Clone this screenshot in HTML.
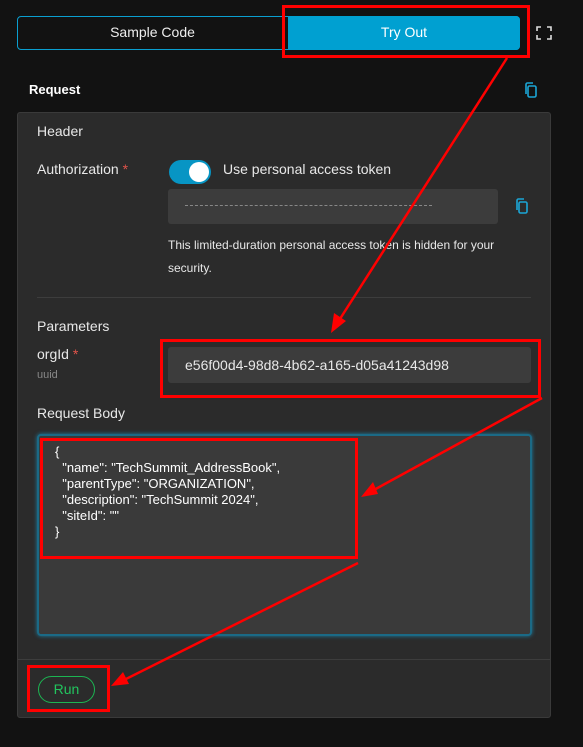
<!DOCTYPE html><html><head><style>
body{margin:0;width:583px;height:747px;background:#121212;font-family:"Liberation Sans",sans-serif;color:#e8e8e8;position:relative;overflow:hidden}
.a{position:absolute}
.t{font-size:14px}
</style></head><body>
<div class="a" style="left:17px;top:16px;width:503px;height:34px;border:1px solid #0a9fd0;border-radius:4px;box-sizing:border-box"></div>
<div class="a t" style="left:17px;top:16px;width:271px;height:34px;line-height:32px;text-align:center;color:#eee">Sample Code</div>
<div class="a t" style="left:288px;top:16px;width:232px;height:34px;line-height:32px;text-align:center;background:#00a0d1;border-radius:0 4px 4px 0;color:#fff">Try Out</div>
<svg class="a" style="left:536px;top:26px" width="16" height="14" viewBox="0 0 16 14" fill="none" stroke="#ddd" stroke-width="1.6"><path d="M1 5V1h4M11 1h4v4M15 9v4h-4M5 13H1V9"/></svg>
<div class="a" style="left:29px;top:82px;font-size:13px;font-weight:bold;color:#fff">Request</div>
<svg class="a" style="left:524px;top:82px" width="14" height="16" viewBox="0 0 14 16" fill="none" stroke="#1ba6d6" stroke-width="1.6"><rect x="4" y="4" width="8" height="11" rx="1.5"/><path d="M2 12V2.5A1.5 1.5 0 0 1 3.5 1H9"/></svg>
<div class="a" style="left:17px;top:112px;width:534px;height:606px;background:#2b2b2b;border:1px solid #3a3a3a;border-radius:3px;box-sizing:border-box"></div>
<div class="a t" style="left:37px;top:123px">Header</div>
<div class="a t" style="left:37px;top:161px">Authorization <span style="color:#e0534a">*</span></div>
<div class="a" style="left:169px;top:160px;width:42px;height:24px;border-radius:12px;background:#0795c4"></div>
<div class="a" style="left:189px;top:162px;width:20px;height:20px;border-radius:50%;background:#fff"></div>
<div class="a t" style="left:223px;top:161px">Use personal access token</div>
<div class="a" style="left:168px;top:189px;width:330px;height:35px;background:#3c3c3c;border-radius:3px"></div>
<div class="a" style="left:185px;top:205px;width:247px;border-top:1px dashed #888"></div>
<svg class="a" style="left:515px;top:198px" width="14" height="16" viewBox="0 0 14 16" fill="none" stroke="#1ba6d6" stroke-width="1.6"><rect x="4" y="4" width="8" height="11" rx="1.5"/><path d="M2 12V2.5A1.5 1.5 0 0 1 3.5 1H9"/></svg>
<div class="a" style="left:168px;top:234px;font-size:12px;line-height:23px;width:360px">This limited-duration personal access token is hidden for your security.</div>
<div class="a" style="left:37px;top:297px;width:494px;border-top:1px solid #3d3d3d"></div>
<div class="a t" style="left:37px;top:318px">Parameters</div>
<div class="a t" style="left:37px;top:346px">orgId <span style="color:#e0534a">*</span></div>
<div class="a" style="left:37px;top:369px;font-size:11px;color:#888">uuid</div>
<div class="a" style="left:168px;top:347px;width:363px;height:36px;background:#3c3c3c;border-radius:3px"></div>
<div class="a t" style="left:185px;top:357px">e56f00d4-98d8-4b62-a165-d05a41243d98</div>
<div class="a t" style="left:37px;top:405px">Request Body</div>
<div class="a" style="left:37px;top:434px;width:495px;height:202px;background:#3a3a3a;border:2px solid #1b6a86;border-radius:4px;box-sizing:border-box;box-shadow:0 0 4px #1b7fa3"></div>
<div class="a" style="left:55px;top:444px;font-size:13px;line-height:16px;white-space:pre;color:#fff">{
  "name": "TechSummit_AddressBook",
  "parentType": "ORGANIZATION",
  "description": "TechSummit 2024",
  "siteId": ""
}</div>
<div class="a" style="left:18px;top:659px;width:532px;border-top:1px solid #3d3d3d"></div>
<div class="a" style="left:38px;top:676px;width:57px;height:27px;border:1px solid #1cb552;border-radius:14px;box-sizing:border-box;color:#22c55e;font-size:14px;text-align:center;line-height:24px">Run</div>
<div class="a" style="left:282px;top:5px;width:248px;height:53px;border:3px solid #f00;box-sizing:border-box"></div>
<div class="a" style="left:160px;top:339px;width:381px;height:59px;border:3px solid #f00;box-sizing:border-box"></div>
<div class="a" style="left:40px;top:438px;width:318px;height:121px;border:3px solid #f00;box-sizing:border-box"></div>
<div class="a" style="left:27px;top:665px;width:83px;height:47px;border:3px solid #f00;box-sizing:border-box"></div>
<svg class="a" style="left:0;top:0" width="583" height="747" fill="none" stroke="#f00" stroke-width="2.5">
<path d="M507 58L338 322"/><path d="M331 333l3-20 12 8z" fill="#f00" stroke="none"/>
<path d="M542 398L372 491"/><path d="M361 497l12-15 5 12z" fill="#f00" stroke="none"/>
<path d="M358 563L122 681"/><path d="M111 686l12-14 6 12z" fill="#f00" stroke="none"/>
</svg>
</body></html>
